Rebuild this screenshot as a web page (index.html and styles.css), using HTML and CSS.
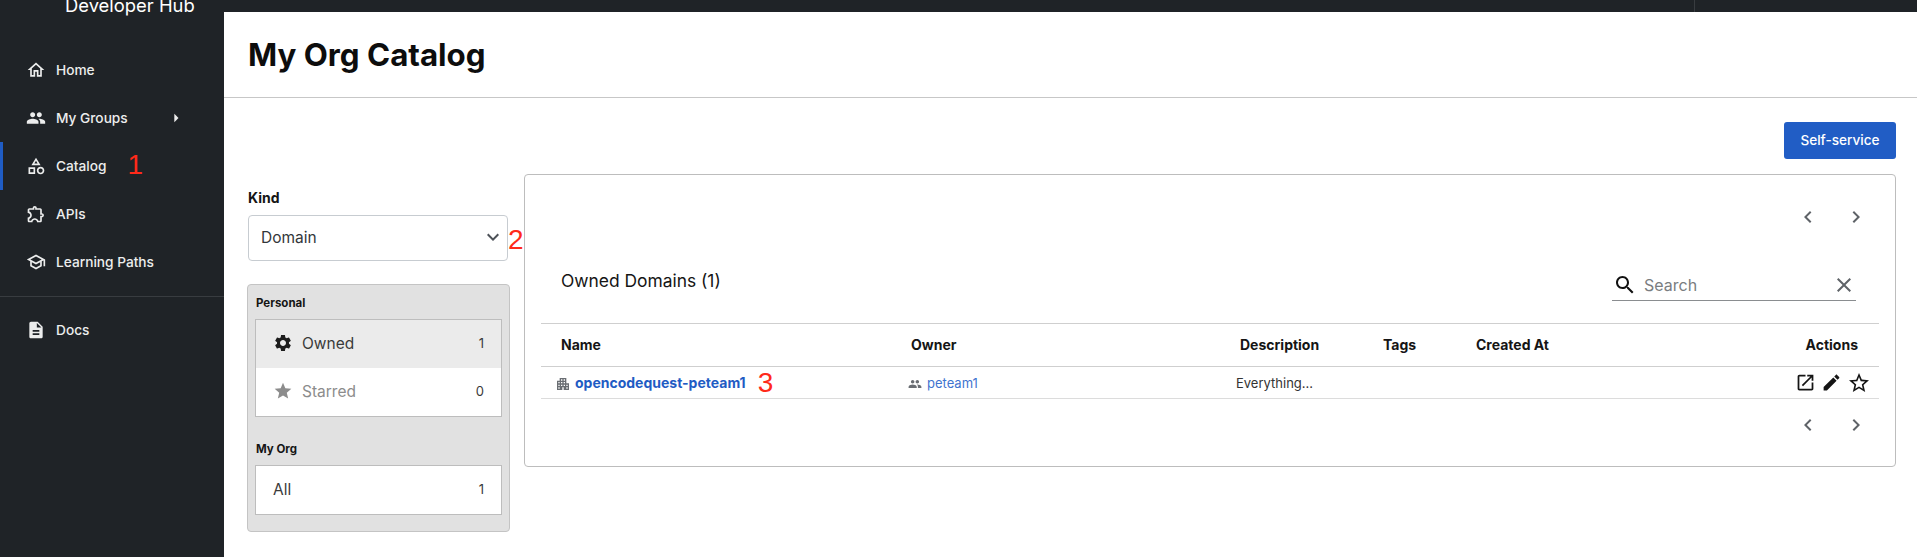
FILE: index.html
```html
<!DOCTYPE html>
<html lang="en">
<head>
  <meta charset="UTF-8" />
  <title>My Org Catalog</title>
  <link rel="stylesheet" href="styles.css">
</head>
<body>
  <svg class="sprite" aria-hidden="true">
    <symbol id="i-home" viewBox="0 0 24 24"><path d="M12 5.69l5 4.5V18h-2v-6H9v6H7v-7.81l5-4.5M12 3L2 12h3v8h6v-6h2v6h6v-8h3L12 3z"/></symbol>
    <symbol id="i-people" viewBox="0 0 24 24"><path d="M16 11c1.66 0 2.99-1.34 2.99-3S17.66 5 16 5c-1.66 0-3 1.34-3 3s1.34 3 3 3zm-8 0c1.66 0 2.99-1.34 2.99-3S9.66 5 8 5C6.34 5 5 6.34 5 8s1.34 3 3 3zm0 2c-2.33 0-7 1.17-7 3.5V19h14v-2.5c0-2.33-4.67-3.5-7-3.5zm8 0c-.29 0-.62.02-.97.05 1.16.84 1.97 1.97 1.97 3.45V19h6v-2.5c0-2.33-4.67-3.5-7-3.5z"/></symbol>
    <symbol id="i-category" viewBox="0 0 24 24"><path d="M12 2l-5.5 9h11L12 2zm0 3.84L13.93 9h-3.87L12 5.84zM17.5 13c-2.49 0-4.5 2.01-4.5 4.5s2.01 4.5 4.5 4.5 4.5-2.01 4.5-4.5-2.01-4.5-4.5-4.5zm0 7c-1.38 0-2.5-1.12-2.5-2.5s1.12-2.5 2.5-2.5 2.5 1.12 2.5 2.5-1.12 2.5-2.5 2.5zM3 21.5h8v-8H3v8zm2-6h4v4H5v-4z"/></symbol>
    <symbol id="i-extension" viewBox="0 0 24 24"><path d="M10.5 4.5c.28 0 .5.22.5.5v2h6v6h2c.28 0 .5.22.5.5s-.22.5-.5.5h-2v6h-2.12c-.68-1.75-2.39-3-4.38-3s-3.7 1.25-4.38 3H4v-2.12c1.75-.68 3-2.39 3-4.38 0-1.99-1.24-3.7-2.99-4.38L4 7h6V5c0-.28.22-.5.5-.5m0-2C9.12 2.5 8 3.62 8 5H4c-1.1 0-1.99.9-1.99 2v3.8h.29c1.49 0 2.7 1.21 2.7 2.7s-1.21 2.7-2.7 2.7H2V20c0 1.1.9 2 2 2h3.8v-.3c0-1.49 1.21-2.7 2.7-2.7s2.7 1.21 2.7 2.7v.3H17c1.1 0 2-.9 2-2v-4c1.38 0 2.5-1.12 2.5-2.5S20.38 11 19 11V7c0-1.1-.9-2-2-2h-4c0-1.38-1.12-2.5-2.5-2.5z"/></symbol>
    <symbol id="i-school" viewBox="0 0 24 24"><path d="M12 3L1 9l4 2.18v6L12 21l7-3.82v-6l2-1.09V17h2V9L12 3zm6.82 6L12 12.72 5.18 9 12 5.28 18.82 9zM17 15.99l-5 2.73-5-2.73v-3.72L12 15l5-2.73v3.72z"/></symbol>
    <symbol id="i-doc" viewBox="0 0 24 24"><path d="M14 2H6c-1.1 0-1.99.9-1.99 2L4 20c0 1.1.89 2 1.99 2H18c1.1 0 2-.9 2-2V8l-6-6zm2 16H8v-2h8v2zm0-4H8v-2h8v2zm-3-5V3.5L18.5 9H13z"/></symbol>
    <symbol id="i-gear" viewBox="0 0 24 24"><path d="M19.14 12.94c.04-.3.06-.61.06-.94 0-.32-.02-.64-.07-.94l2.03-1.58c.18-.14.23-.41.12-.61l-1.92-3.32c-.12-.22-.37-.29-.59-.22l-2.39.96c-.5-.38-1.03-.7-1.62-.94l-.36-2.54c-.04-.24-.24-.41-.48-.41h-3.84c-.24 0-.43.17-.47.41l-.36 2.54c-.59.24-1.13.57-1.62.94l-2.39-.96c-.22-.08-.47 0-.59.22L2.74 8.87c-.12.21-.08.47.12.61l2.03 1.58c-.05.3-.09.63-.09.94s.02.64.07.94l-2.03 1.58c-.18.14-.23.41-.12.61l1.92 3.32c.12.22.37.29.59.22l2.39-.96c.5.38 1.03.7 1.62.94l.36 2.54c.05.24.24.41.48.41h3.84c.24 0 .44-.17.47-.41l.36-2.54c.59-.24 1.13-.56 1.62-.94l2.39.96c.22.08.47 0 .59-.22l1.92-3.32c.12-.22.07-.47-.12-.61l-2.01-1.58zM12 15.6c-1.98 0-3.6-1.62-3.6-3.6s1.62-3.6 3.6-3.6 3.6 1.62 3.6 3.6-1.62 3.6-3.6 3.6z"/></symbol>
    <symbol id="i-star" viewBox="0 0 24 24"><path d="M12 17.27L18.18 21l-1.64-7.03L22 9.24l-7.19-.61L12 2 9.19 8.63 2 9.24l5.46 4.73L5.82 21z"/></symbol>
    <symbol id="i-star-border" viewBox="0 0 24 24"><path d="M22 9.24l-7.19-.62L12 2 9.19 8.63 2 9.24l5.46 4.73L5.82 21 12 17.27 18.18 21l-1.63-7.03L22 9.24zM12 15.4l-3.76 2.27 1-4.28-3.32-2.88 4.38-.38L12 6.1l1.71 4.04 4.38.38-3.32 2.88 1 4.28L12 15.4z"/></symbol>
    <symbol id="i-edit" viewBox="0 0 24 24"><path d="M3 17.25V21h3.75L17.81 9.94l-3.75-3.75L3 17.25zM20.71 7.04c.39-.39.39-1.02 0-1.41l-2.34-2.34c-.39-.39-1.02-.39-1.41 0l-1.83 1.83 3.75 3.75 1.83-1.83z"/></symbol>
    <symbol id="i-open" viewBox="0 0 24 24"><path d="M19 19H5V5h7V3H5c-1.11 0-2 .9-2 2v14c0 1.1.89 2 2 2h14c1.1 0 2-.9 2-2v-7h-2v7zM14 3v2h3.59l-9.83 9.83 1.41 1.41L19 6.41V10h2V3h-7z"/></symbol>
    <symbol id="i-search" viewBox="0 0 24 24"><path d="M15.5 14h-.79l-.28-.27C15.41 12.59 16 11.11 16 9.5 16 5.91 13.09 3 9.5 3S3 5.91 3 9.5 5.91 16 9.5 16c1.61 0 3.09-.59 4.23-1.57l.27.28v.79l5 4.99L20.49 19l-4.99-5zm-6 0C7.01 14 5 11.99 5 9.5S7.01 5 9.5 5 14 7.01 14 9.5 11.99 14 9.5 14z"/></symbol>
    <symbol id="i-clear" viewBox="0 0 24 24"><path d="M19 6.41L17.59 5 12 10.59 6.41 5 5 6.41 10.59 12 5 17.59 6.41 19 12 13.41 17.59 19 19 17.59 13.41 12z"/></symbol>
    <symbol id="i-prev" viewBox="0 0 24 24"><path d="M15.41 7.41L14 6l-6 6 6 6 1.41-1.41L10.83 12z"/></symbol>
    <symbol id="i-next" viewBox="0 0 24 24"><path d="M10 6L8.59 7.41 13.17 12l-4.58 4.59L10 18l6-6z"/></symbol>
    <symbol id="i-expand" viewBox="0 0 24 24"><path d="M16.59 8.59L12 13.17 7.41 8.59 6 10l6 6 6-6z"/></symbol>
    <symbol id="i-apartment" viewBox="0 0 24 24"><path d="M17 11V3H7v4H3v14h8v-4h2v4h8V11h-4zM7 19H5v-2h2v2zm0-4H5v-2h2v2zm0-4H5V9h2v2zm4 4H9v-2h2v2zm0-4H9V9h2v2zm0-4H9V5h2v2zm4 8h-2v-2h2v2zm0-4h-2V9h2v2zm0-4h-2V5h2v2zm4 12h-2v-2h2v2zm0-4h-2v-2h2v2z"/></symbol>
    <symbol id="i-arrow" viewBox="0 0 24 24"><path d="M10 17l5-5-5-5v10z"/></symbol>
  </svg>

  <aside class="sidebar">
    <div class="brand">Developer Hub</div>
    <nav class="nav">
      <a class="nav-item"><svg class="nav-icon"><use href="#i-home"/></svg>Home</a>
      <a class="nav-item"><svg class="nav-icon"><use href="#i-people"/></svg>My Groups<svg class="nav-arrow"><use href="#i-arrow"/></svg></a>
      <a class="nav-item active"><svg class="nav-icon"><use href="#i-category"/></svg>Catalog<span class="mark mark-nav">1</span></a>
      <a class="nav-item"><svg class="nav-icon"><use href="#i-extension"/></svg>APIs</a>
      <a class="nav-item"><svg class="nav-icon"><use href="#i-school"/></svg>Learning Paths</a>
    </nav>
    <nav class="nav nav-bottom">
      <a class="nav-item"><svg class="nav-icon"><use href="#i-doc"/></svg>Docs</a>
    </nav>
  </aside>

  <main class="main">
    <div class="strip"><span class="strip-divider"></span></div>
    <header class="page-header">
      <h1>My Org Catalog</h1>
    </header>

    <div class="content">
      <div class="actions-row">
        <button class="btn-primary">Self-service</button>
      </div>

      <div class="columns">
        <section class="filters">
          <label class="kind-label">Kind</label>
          <div class="kind-row">
            <div class="select">
              <span>Domain</span>
              <svg class="select-icon"><use href="#i-expand"/></svg>
            </div>
            <span class="mark mark-select">2</span>
          </div>

          <div class="filter-panel">
            <h3 class="filter-title">Personal</h3>
            <ul class="filter-box">
              <li class="filter-item selected"><svg class="filter-icon"><use href="#i-gear"/></svg><span class="filter-name">Owned</span><span class="filter-count">1</span></li>
              <li class="filter-item starred"><svg class="filter-icon"><use href="#i-star"/></svg><span class="filter-name">Starred</span><span class="filter-count">0</span></li>
            </ul>
            <h3 class="filter-title filter-title-org">My Org</h3>
            <ul class="filter-box">
              <li class="filter-item plain"><span class="filter-name">All</span><span class="filter-count">1</span></li>
            </ul>
          </div>
        </section>

        <section class="card">
          <div class="pager pager-top">
            <svg class="pager-icon"><use href="#i-prev"/></svg>
            <svg class="pager-icon"><use href="#i-next"/></svg>
          </div>

          <div class="toolbar">
            <h2 class="card-title">Owned Domains (1)</h2>
            <div class="search">
              <svg class="search-icon"><use href="#i-search"/></svg>
              <span class="search-text">Search</span>
              <svg class="clear-icon"><use href="#i-clear"/></svg>
            </div>
          </div>

          <table class="table">
            <thead>
              <tr>
                <th class="col-name">Name</th>
                <th class="col-owner">Owner</th>
                <th class="col-desc">Description</th>
                <th class="col-tags">Tags</th>
                <th class="col-created">Created At</th>
                <th class="col-actions">Actions</th>
              </tr>
            </thead>
            <tbody>
              <tr>
                <td class="cell-name"><svg class="cell-icon cell-icon-domain"><use href="#i-apartment"/></svg><a class="entity-link">opencodequest-peteam1</a><span class="mark mark-row">3</span></td>
                <td class="cell-owner"><svg class="cell-icon"><use href="#i-people"/></svg><a class="owner-link">peteam1</a></td>
                <td class="cell-desc">Everything...</td>
                <td></td>
                <td></td>
                <td class="cell-actions">
                  <div class="row-actions">
                    <svg class="action-icon"><use href="#i-open"/></svg>
                    <svg class="action-icon"><use href="#i-edit"/></svg>
                    <svg class="action-icon action-star"><use href="#i-star-border"/></svg>
                  </div>
                </td>
              </tr>
            </tbody>
          </table>

          <div class="pager pager-bottom">
            <svg class="pager-icon"><use href="#i-prev"/></svg>
            <svg class="pager-icon"><use href="#i-next"/></svg>
          </div>
        </section>
      </div>
    </div>
  </main>
</body>
</html>
```

FILE: styles.css
```css
* {
  box-sizing: border-box;
}
html, body {
  height: 100%;
}
body {
  margin: 0;
  display: flex;
  overflow: hidden;
  background: #fff;
  color: #151515;
  font-family: "Inter", "Liberation Sans", sans-serif;
}
svg {
  fill: currentColor;
  flex: none;
}
.sprite {
  width: 0;
  height: 0;
  position: absolute;
}

/* sidebar */
.sidebar {
  width: 224px;
  flex: none;
  background: #1f2327;
  color: #fff;
}
.brand {
  height: 22px;
  padding-left: 65px;
  font-size: 18.4px;
  line-height: 10px;
  overflow: hidden;
}
.nav {
  padding-top: 24px;
}
.nav-bottom {
  margin-top: 10px;
  padding-top: 9px;
  border-top: 1px solid #383c40;
}
.nav-item {
  display: flex;
  align-items: center;
  height: 48px;
  padding-left: 26px;
  font-size: 13.7px;
  font-weight: 500;
  color: #eceded;
  border-left: 3px solid transparent;
}
.nav-item.active {
  border-left-color: #1f5cc4;
}
.nav-icon {
  width: 20px;
  height: 20px;
  margin-right: 10px;
  margin-left: -3px;
}
.nav-arrow {
  width: 20px;
  height: 20px;
  margin-left: 38px;
}
.mark {
  color: #ff2a1a;
  font-family: "Liberation Sans", sans-serif;
  font-weight: 400;
}
.mark-nav {
  font-size: 28px;
  margin-left: 21px;
  margin-top: -2px;
}

/* main area */
.main {
  flex: 1;
  min-width: 0;
}
.strip {
  height: 12px;
  background: #1f2327;
  position: relative;
}
.strip-divider {
  position: absolute;
  left: 1470px;
  top: 0;
  width: 1px;
  height: 12px;
  background: #383c40;
}
.page-header {
  height: 86px;
  padding: 23px 24px 0;
  border-bottom: 1px solid #c7c7c7;
}
h1 {
  margin: 0;
  font-size: 31.3px;
  line-height: 40px;
  font-weight: 700;
  color: #0d0d0d;
}
.content {
  padding: 24px 21px 0 24px;
}
.actions-row {
  display: flex;
  justify-content: flex-end;
  height: 52px;
}
.btn-primary {
  width: 112px;
  height: 37px;
  padding-bottom: 3px;
  border: none;
  border-radius: 3px;
  background: #215dc5;
  color: #fff;
  font-family: inherit;
  font-size: 13.6px;
  font-weight: 500;
}
.columns {
  display: flex;
  align-items: flex-start;
}

/* left filters */
.filters {
  width: 276px;
  flex: none;
  padding-top: 15px;
}
.kind-label {
  display: block;
  font-size: 14px;
  line-height: 17px;
  font-weight: 700;
}
.kind-row {
  display: flex;
  align-items: center;
  margin-top: 9px;
}
.select {
  width: 260px;
  height: 46px;
  display: flex;
  align-items: center;
  justify-content: space-between;
  padding: 0 2px 2px 12px;
  border: 1px solid #c7ccd1;
  border-radius: 4px;
  font-size: 15.5px;
  color: #33373a;
}
.select-icon {
  width: 24px;
  height: 24px;
  color: #4d5258;
}
.mark-select {
  font-size: 28px;
  margin-top: 4px;
}
.filter-panel {
  width: 263px;
  height: 248px;
  margin: 23px 0 0 -1px;
  padding: 11px 7px;
  background: #e1e1e1;
  border: 1px solid #c4c4c4;
  border-radius: 4px;
}
.filter-title {
  margin: 0;
  padding-left: 1px;
  font-size: 11.5px;
  line-height: 14px;
  font-weight: 700;
}
.filter-title-org {
  margin-top: 25px;
}
.filter-box {
  list-style: none;
  margin: 9px 0 0;
  padding: 0;
  background: #fff;
  border: 1px solid #bdbdbd;
}
.filter-item {
  display: flex;
  align-items: center;
  height: 48px;
  padding: 0 17px 2px 17px;
  font-size: 15.5px;
  color: #3a3a3a;
}
.filter-item.selected {
  background: #ebebeb;
}
.filter-item.starred {
  color: #8c8c8c;
}
.filter-icon {
  width: 20px;
  height: 20px;
  margin-right: 9px;
  color: #1c1c1c;
}
.starred .filter-icon {
  color: #8c8c8c;
}
.filter-name {
  flex: 1;
}
.filter-count {
  font-size: 13px;
  color: #3a3a3a;
}

/* table card */
.card {
  flex: 1;
  min-width: 0;
  height: 293px;
  padding: 0 16px;
  background: #fff;
  border: 1px solid #bdbdbd;
  border-radius: 4px;
}
.pager {
  display: flex;
  justify-content: flex-end;
  gap: 24px;
  padding-right: 11px;
}
.pager-top {
  padding-top: 30px;
}
.pager-bottom {
  padding-top: 14px;
}
.pager-icon {
  width: 24px;
  height: 24px;
  color: #5f6368;
}
.toolbar {
  display: flex;
  align-items: center;
  justify-content: space-between;
  height: 97px;
  margin-top: -3px;
  padding: 0 23px 0 20px;
}
.card-title {
  margin: 12px 0 0;
  font-size: 17.4px;
  line-height: 24px;
  font-weight: 400;
  color: #151515;
}
.search {
  width: 244px;
  height: 32px;
  display: flex;
  align-items: center;
  margin-top: 21px;
  padding-left: 1px;
  border-bottom: 1px solid #8a8d90;
}
.search-icon {
  width: 24px;
  height: 24px;
  color: #111;
}
.search-text {
  flex: 1;
  margin-left: 7px;
  font-size: 16px;
  color: #7a7d80;
}
.clear-icon {
  width: 24px;
  height: 24px;
  color: #5f6368;
}
.table {
  width: 100%;
  table-layout: fixed;
  border-collapse: collapse;
  border-top: 1px solid #cfcfcf;
  font-size: 13px;
}
th {
  height: 43px;
  padding: 0 0 2px;
  text-align: left;
  font-weight: 700;
  font-size: 14px;
  border-bottom: 1px solid #cfcfcf;
}
td {
  height: 32px;
  padding: 0;
  border-bottom: 1px solid #dcdcdc;
  white-space: nowrap;
}
.col-name {
  width: 370px;
  padding-left: 20px;
}
.col-owner {
  width: 325px;
}
.col-desc {
  width: 147px;
  padding-left: 4px;
}
.col-tags {
  width: 93px;
}
.col-created {
  width: 200px;
}
th.col-actions {
  text-align: right;
  padding-right: 21px;
}
.cell-name {
  padding-left: 14px;
}
.cell-owner .cell-icon {
  margin-left: -3px;
}
.cell-desc {
  color: #333;
}
.cell-icon {
  width: 14px;
  height: 14px;
  vertical-align: -3px;
  margin-right: 5px;
  color: #6a6e73;
}
.cell-icon-domain {
  width: 16px;
  height: 16px;
  vertical-align: -4px;
  margin-right: 4px;
}
.entity-link {
  color: #1f5cc4;
  font-weight: 700;
  font-size: 14px;
}
.owner-link {
  color: #3f74cf;
}
.mark-row {
  font-size: 28px;
  line-height: 20px;
  margin-left: 12px;
  vertical-align: -4px;
}
.row-actions {
  display: flex;
  justify-content: flex-end;
  align-items: center;
  gap: 5px;
  padding-right: 8px;
}
.action-icon {
  width: 21px;
  height: 21px;
  color: #151515;
}
.action-star {
  width: 24px;
  height: 24px;
}
```
